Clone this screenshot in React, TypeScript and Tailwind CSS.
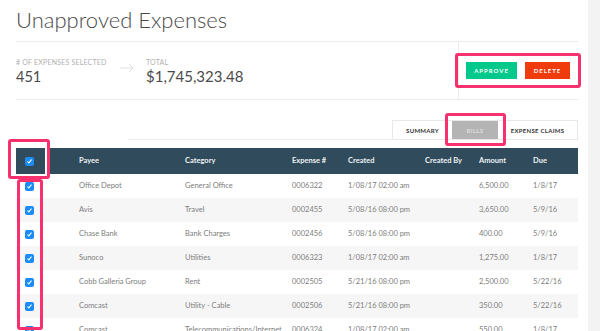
import React from "react";

const rows = [
  ["Office Depot", "General Office", "0006322", "1/08/17 02:00 am", "", "6,500.00", "1/8/17"],
  ["Avis", "Travel", "0002455", "5/08/16 08:00 pm", "", "3,650.00", "5/9/16"],
  ["Chase Bank", "Bank Charges", "0002456", "5/08/16 08:00 pm", "", "400.00", "5/9/16"],
  ["Sunoco", "Utilities", "0006323", "1/08/17 02:00 am", "", "1,275.00", "1/8/17"],
  ["Cobb Galleria Group", "Rent", "0002505", "5/21/16 08:00 pm", "", "2,500.00", "5/22/16"],
  ["Comcast", "Utility - Cable", "0002506", "5/21/16 08:00 pm", "", "350.00", "5/22/16"],
  ["Comcast", "Telecommunications/Internet", "0006324", "1/08/17 02:00 am", "", "550.00", "1/8/17"],
];

const headers = ["Payee", "Category", "Expense #", "Created", "Created By", "Amount", "Due"];

const cols = "grid grid-cols-[63px_106px_107px_56px_77px_54px_54px_1fr]";

function Check() {
  return (
    <div className="w-[9px] h-[9px] rounded-[2px] bg-[#1a8cf5] flex items-center justify-center">
      <svg width="7" height="7" viewBox="0 0 8 8" fill="none">
        <path d="M2 4.3 L3.3 5.6 L6 2.2" stroke="white" strokeWidth="1.2" strokeLinecap="round" strokeLinejoin="round" />
      </svg>
    </div>
  );
}

export default function App() {
  return (
    <div
      className="relative w-[600px] h-[331px] overflow-hidden bg-white flex"
      style={{ fontFamily: "Lato, 'Open Sans', sans-serif" }}
    >
      <div className="w-[588px] pl-4 pr-[10px] shrink-0">
        <h1 className="text-[22px] font-light text-[#4a4a4a] leading-[26px] pt-[7px] pb-[8px]">
          Unapproved Expenses
        </h1>
        <div className="flex border-t border-b border-[#ececec] h-[59px]">
          <div className="flex-1 flex items-start pt-[16px]">
            <div className="w-[104px]">
              <div className="text-[7px] text-[#b0b0b0] uppercase leading-[9px] tracking-[0.2px]">
                # of Expenses Selected
              </div>
              <div className="text-[14.5px] text-[#4a4a4a] leading-[18px] mt-[1px]">451</div>
            </div>
            <svg width="14" height="10" viewBox="0 0 14 10" className="mt-[5px]" fill="none">
              <path d="M0 5 H13 M9 1 L13 5 L9 9" stroke="#e0e0e0" strokeWidth="1" />
            </svg>
            <div className="ml-[12px]">
              <div className="text-[7px] text-[#b0b0b0] uppercase leading-[9px] tracking-[0.2px]">Total</div>
              <div className="text-[15px] text-[#4a4a4a] leading-[19px]">$1,745,323.48</div>
            </div>
          </div>
          <div className="relative w-[120px] border-l border-[#ececec] flex items-center pl-[7px] gap-[8px]">
            <div className="w-[51px] h-[17px] bg-[#00c98b] text-white text-[6px] font-bold tracking-[1px] flex items-center justify-center">
              APPROVE
            </div>
            <div className="w-[45px] h-[17px] bg-[#f03c0c] text-white text-[6px] font-bold tracking-[1px] flex items-center justify-center">
              DELETE
            </div>
            <div className="absolute left-[-4px] top-[11px] w-[126px] h-[35px] border-[3px] border-[#f7306e] rounded-[3px]" />
          </div>
        </div>
        <div className="flex h-[40px] pt-[20px]">
          <div className="ml-[112px] flex-1 border-b border-[#ececec]" />
          <div className="relative flex h-[20px] border border-[#e8e8e8] text-[6px] tracking-[0.3px] font-bold text-[#333]">
            <div className="w-[59px] flex items-center justify-center">SUMMARY</div>
            <div className="w-[46px] bg-[#b4b4b4] text-[#ddd] flex items-center justify-center">BILLS</div>
            <div className="w-[79px] flex items-center justify-center">EXPENSE CLAIMS</div>
            <div className="absolute left-[52px] top-[-8px] w-[61px] h-[33px] border-[3px] border-[#f7306e] rounded-[3px]" />
          </div>
        </div>
        <div className="mt-[8px]">
          <div className={`${cols} h-[26px] bg-[#304b5b] items-center text-[7.5px] font-bold text-[#eef2f4]`}>
            <div className="pl-[9px]">
              <Check />
            </div>
            {headers.map((h) => (
              <div key={h}>{h}</div>
            ))}
          </div>
          {rows.map((r, i) => (
            <div
              key={i}
              className={`${cols} h-[24px] items-center text-[7.5px] text-[#7d7d7d] ${i % 2 === 1 ? "bg-[#f6f6f6]" : "bg-white"}`}
            >
              <div className="pl-[9px]">
                <Check />
              </div>
              {r.map((c, j) => (
                <div key={j} className="whitespace-nowrap">
                  {c}
                </div>
              ))}
            </div>
          ))}
        </div>
      </div>
      <div className="flex-1 bg-[#f3f3f3]" />
      <div className="absolute left-[8px] top-[139px] w-[42px] h-[40px] border-[3px] border-[#f7306e] rounded-[3px] shadow-[inset_0_0_0_2px_white]" />
      <div className="absolute left-[17px] top-[179px] w-[26px] h-[151px] border-[3px] border-[#f7306e] rounded-[3px]" />
    </div>
  );
}
